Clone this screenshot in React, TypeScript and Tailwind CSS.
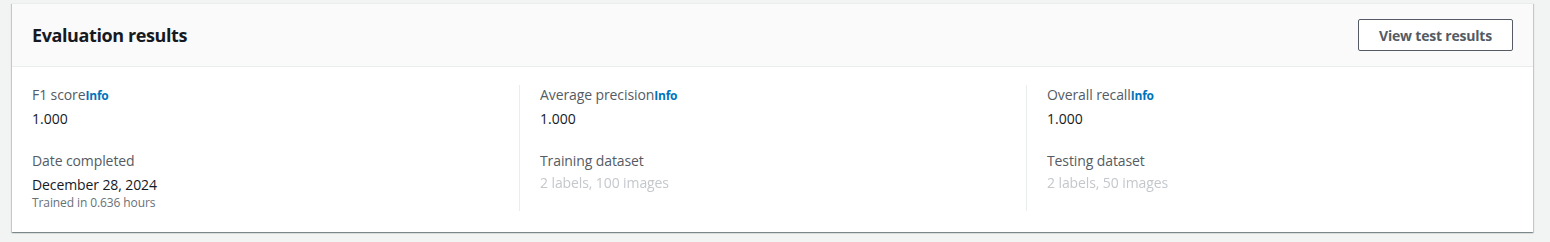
export default function App() {
  const font = { fontFamily: '"Open Sans", Roboto, Arial, sans-serif' };

  const Label = ({ text, info }: { text: string; info?: boolean }) => (
    <div className="text-[14px] leading-[20px] tracking-[-0.1px] text-[#545b64]">
      {text}
      {info && <span className="text-[12px] font-bold tracking-[-0.2px] text-[#0073bb]">Info</span>}
    </div>
  );

  const Masked = ({ text }: { text: string }) => (
    <div className="mt-[4px] text-[14px] leading-[16px] tracking-[-0.1px] text-[#c4c8cc] blur-[0.3px]">{text}</div>
  );

  return (
    <div className="min-h-[242px] w-[1550px] bg-[#f2f3f3] pt-[3px] pl-[12px]" style={font}>
      <div className="w-[1521px] border-t border-[#eaeded] bg-white shadow-[0_1px_1px_0_rgba(0,28,36,0.3),1px_1px_1px_0_rgba(0,28,36,0.15),-1px_1px_1px_0_rgba(0,28,36,0.15)]">
        <div className="flex h-[63px] items-center justify-between border-b border-[#eaeded] bg-[#fafafa] px-5">
          <h2 className="text-[18px] font-bold leading-[22px] tracking-[-0.4px] text-[#16191f]">Evaluation results</h2>
          <button className="h-[32px] w-[155px] rounded-[2px] border border-[#545b64] bg-white text-[14px] font-bold tracking-[-0.2px] text-[#545b64]">
            View test results
          </button>
        </div>
        <div className="grid grid-cols-[487px_507px_1fr] px-5 pt-[18px] pb-[21px]">
          <div>
            <Label text="F1 score" info />
            <div className="mt-[3px] text-[14px] leading-[20px] text-[#16191f]">1.000</div>
            <div className="mt-[22px]">
              <Label text="Date completed" />
            </div>
            <div className="mt-[4px] text-[14px] leading-[20px] tracking-[-0.1px] text-[#16191f]">December 28, 2024</div>
            <div className="text-[12px] leading-[16px] tracking-[-0.1px] text-[#687078]">Trained in 0.636 hours</div>
          </div>
          <div className="border-l border-[#eaeded] pl-5">
            <Label text="Average precision" info />
            <div className="mt-[3px] text-[14px] leading-[20px] text-[#16191f]">1.000</div>
            <div className="mt-[22px]">
              <Label text="Training dataset" />
            </div>
            <Masked text="2 labels, 100 images" />
          </div>
          <div className="border-l border-[#eaeded] pl-5">
            <Label text="Overall recall" info />
            <div className="mt-[3px] text-[14px] leading-[20px] text-[#16191f]">1.000</div>
            <div className="mt-[22px]">
              <Label text="Testing dataset" />
            </div>
            <Masked text="2 labels, 50 images" />
          </div>
        </div>
      </div>
    </div>
  );
}
